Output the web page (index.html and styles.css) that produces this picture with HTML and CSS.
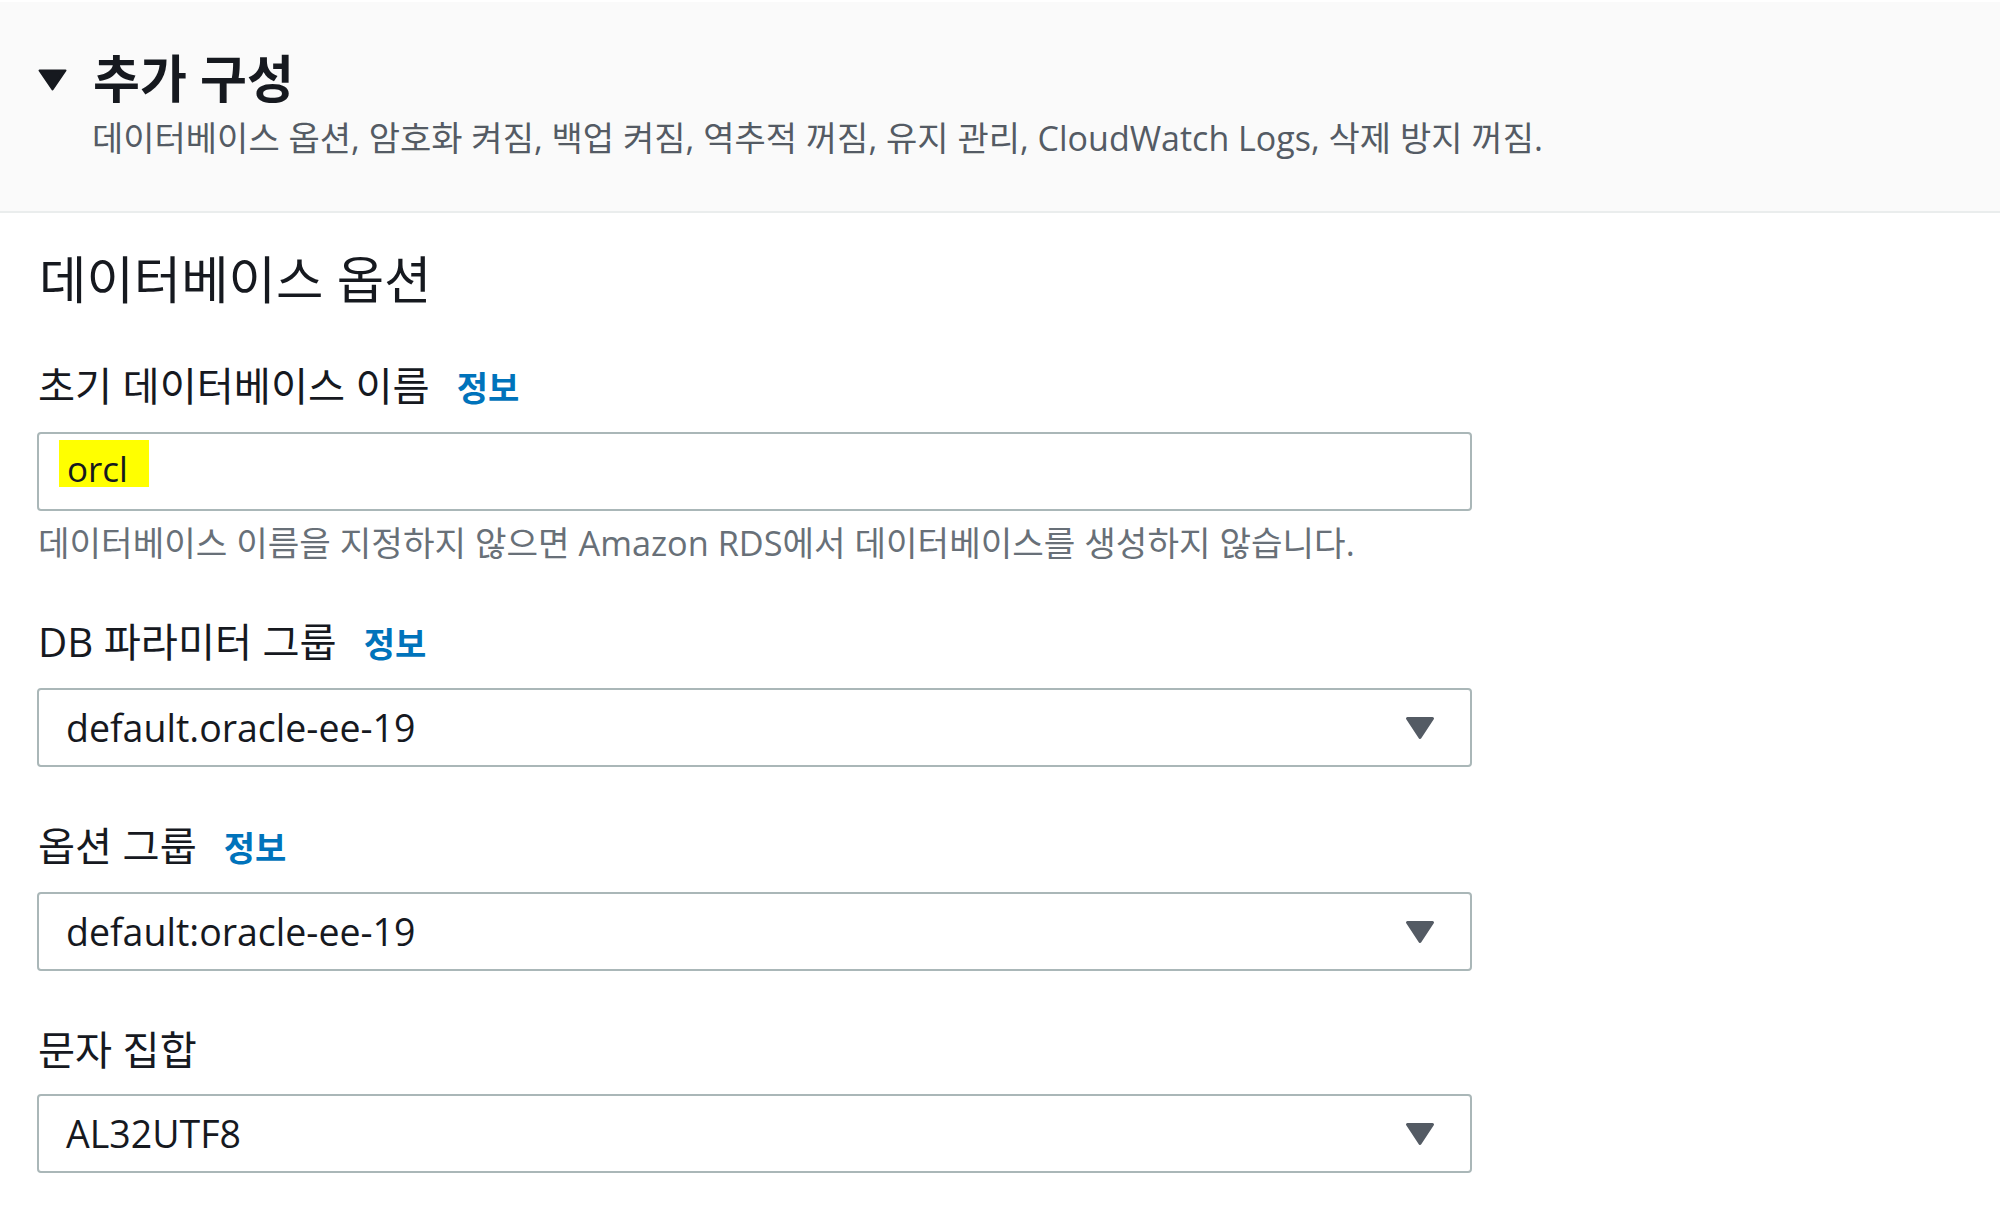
FILE: index.html
```html
<!DOCTYPE html>
<html lang="ko">
<head>
<meta charset="utf-8">
<title>추가 구성</title>
<link rel="stylesheet" href="styles.css">
</head>
<body>
<div class="expander">
  <div class="exp-head">
    <svg class="exp-caret" width="29" height="22" viewBox="0 0 29 22" aria-hidden="true"><path d="M1.5 1.5 H27.5 L14.5 20.5 Z" fill="#16191f" stroke="#16191f" stroke-width="2" stroke-linejoin="round"/></svg>
    <h2 class="exp-title">추가 구성</h2>
  </div>
  <p class="exp-desc">데이터베이스 옵션, 암호화 켜짐, 백업 켜짐, 역추적 꺼짐, 유지 관리, CloudWatch Logs, 삭제 방지 꺼짐.</p>
</div>

<section class="content">
  <h3 class="section-title">데이터베이스 옵션</h3>

  <div class="field">
    <div class="label">초기 데이터베이스 이름<a class="info">정보</a></div>
    <div class="control"><span class="hl">orcl</span></div>
    <p class="hint">데이터베이스 이름을 지정하지 않으면 Amazon RDS에서 데이터베이스를 생성하지 않습니다.</p>
  </div>

  <div class="field">
    <div class="label">DB 파라미터 그룹<a class="info">정보</a></div>
    <div class="control select">
      <span class="value">default.oracle-ee-19</span>
      <svg class="sel-caret" width="30" height="24" viewBox="0 0 30 24" aria-hidden="true"><path d="M2.5 2.5 H27.5 L15 21.5 Z" fill="#545b64" stroke="#545b64" stroke-width="3" stroke-linejoin="round"/></svg>
    </div>
  </div>

  <div class="field">
    <div class="label">옵션 그룹<a class="info">정보</a></div>
    <div class="control select">
      <span class="value">default:oracle-ee-19</span>
      <svg class="sel-caret" width="30" height="24" viewBox="0 0 30 24" aria-hidden="true"><path d="M2.5 2.5 H27.5 L15 21.5 Z" fill="#545b64" stroke="#545b64" stroke-width="3" stroke-linejoin="round"/></svg>
    </div>
  </div>

  <div class="field">
    <div class="label">문자 집합</div>
    <div class="control select">
      <span class="value">AL32UTF8</span>
      <svg class="sel-caret" width="30" height="24" viewBox="0 0 30 24" aria-hidden="true"><path d="M2.5 2.5 H27.5 L15 21.5 Z" fill="#545b64" stroke="#545b64" stroke-width="3" stroke-linejoin="round"/></svg>
    </div>
  </div>
</section>
</body>
</html>
```

FILE: styles.css
```css
html, body {
  margin: 0;
  padding: 0;
  background: #ffffff;
}

body {
  font-family: "Open Sans", "Noto Sans CJK KR", sans-serif;
  color: #16191f;
}

.expander {
  box-sizing: border-box;
  height: 213px;
  background: #fafafa;
  border-top: 2px solid #ffffff;
  border-bottom: 2px solid #eaeded;
  padding-top: 48px;
}

.exp-head {
  display: flex;
  align-items: center;
  height: 56px;
  padding-left: 38px;
}

.exp-caret {
  flex: none;
  margin-right: 26px;
  margin-top: 4px;
}

.exp-title {
  margin: 0;
  font-size: 51px;
  line-height: 56px;
  font-weight: 700;
  color: #16191f;
}

.exp-desc {
  margin: 12px 0 0 92px;
  font-size: 34px;
  line-height: 40px;
  color: #545b64;
}

.content {
  padding: 38px 0 40px 37px;
}

.section-title {
  margin: 0;
  font-size: 51.5px;
  line-height: 56px;
  font-weight: 400;
  padding-left: 2px;
  color: #16191f;
}

.field {
  margin-top: 57px;
  width: 1435px;
}

.label {
  font-size: 40.3px;
  line-height: 44px;
  padding-left: 1px;
  margin-bottom: 22px;
  color: #16191f;
  display: flex;
  align-items: baseline;
}

.info {
  margin-left: 27px;
  font-size: 34px;
  font-weight: 700;
  color: #0073bb;
}

.control {
  box-sizing: border-box;
  height: 79px;
  border: 2px solid #aab7b8;
  border-radius: 4px;
  background: #ffffff;
  display: flex;
  align-items: center;
  padding: 0 35px 0 20px;
  font-size: 37.5px;
  color: #16191f;
}

.hl {
  box-sizing: border-box;
  align-self: flex-start;
  margin-top: 6px;
  background: #ffff00;
  padding: 11px 21px 0 8px;
  height: 47px;
  width: 90px;
  font-size: 35px;
  line-height: 36px;
  display: inline-block;
}

.select {
  justify-content: space-between;
  padding-left: 27px;
}

.value {
  line-height: 48px;
}

.sel-caret {
  flex: none;
}

.hint {
  margin: 12px 0 0 0;
  padding-left: 1px;
  font-size: 34.3px;
  line-height: 40px;
  color: #687078;
}
```
